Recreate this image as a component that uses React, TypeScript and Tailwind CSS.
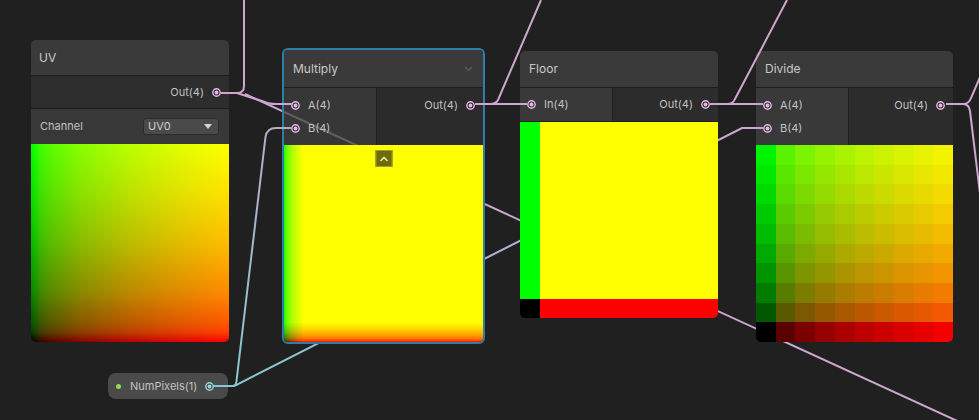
import React from 'react'

const PINK = '#cfa6cf'
const CYAN = '#86c9d2'

// linear -> sRGB steps for the 10x10 preview
const steps = [0, 89, 124, 149, 170, 188, 203, 218, 231, 243]

function Port({ cyan }: { cyan?: boolean }) {
  const c = cyan ? '#92d6df' : '#e6b8e6'
  return (
    <svg width="9" height="9" viewBox="0 0 9 9" className="shrink-0">
      <circle cx="4.5" cy="4.5" r="3.7" fill="none" stroke={c} strokeWidth="1.4" />
      <circle cx="4.5" cy="4.5" r="1.9" fill={c} />
    </svg>
  )
}

function InPort({ label }: { label: string }) {
  return (
    <div className="flex h-[23px] items-center gap-[8px] pl-[7px]">
      <Port />
      <span className="text-[11px] text-[#c2c2c2]">{label}</span>
    </div>
  )
}

function OutPort() {
  return (
    <div className="flex h-[23px] items-center justify-end gap-[8px] pr-[8px]">
      <span className="text-[11px] text-[#c2c2c2]">Out(4)</span>
      <Port />
    </div>
  )
}

function Header({ title, h36 }: { title: string; h36?: boolean }) {
  return (
    <div className={`flex items-center border-b border-[#1e1e1e] bg-[#3a3a3a] px-[9px] text-[12px] text-[#c9c9c9] ${h36 ? 'h-[37px]' : 'h-[38px]'}`}>
      {title}
    </div>
  )
}

export default function App() {
  return (
    <div className="relative h-[420px] w-[979px] overflow-hidden bg-[#202020] font-['Inter',sans-serif]">
      {/* wires running under the nodes */}
      <svg className="absolute inset-0" width="979" height="420">
        <defs>
          <linearGradient id="np-div" gradientUnits="userSpaceOnUse" x1="232" y1="386" x2="767" y2="128">
            <stop offset="0" stopColor={CYAN} />
            <stop offset="1" stopColor={PINK} />
          </linearGradient>
        </defs>
        <path d="M245 94 L990 436" stroke={PINK} strokeWidth="2" fill="none" />
        <path d="M226 386 L233 386 Q236 386 240 383 L742 128 L767 128" stroke="url(#np-div)" strokeWidth="2" fill="none" />
      </svg>

      {/* UV */}
      <div className="absolute left-[31px] top-[40px] w-[198px] overflow-hidden rounded-[5px]">
        <div className="flex h-[36px] items-center border-b border-[#1e1e1e] bg-[#3a3a3a] px-[8px] text-[12px] text-[#c9c9c9]">UV</div>
        <div className="flex h-[32px] items-center justify-end gap-[8px] bg-[#2d2d2d] pr-[8px]">
          <span className="text-[11px] text-[#c2c2c2]">Out(4)</span>
          <Port />
        </div>
        <div className="flex h-[36px] items-center justify-between border-t border-[#1e1e1e] bg-[#383838] pl-[9px] pr-[10px]">
          <span className="text-[11px] text-[#c2c2c2]">Channel</span>
          <div className="flex h-[17px] w-[76px] items-center justify-between rounded-[3px] border border-[#2c2c2c] bg-[#4a4a4a] pl-[4px] pr-[6px]">
            <span className="text-[11px] text-[#d0d0d0]">UV0</span>
            <svg width="8" height="5" viewBox="0 0 8 5"><path d="M0 0 L8 0 L4 5 Z" fill="#d4d4d4" /></svg>
          </div>
        </div>
        <div className="h-[198px] bg-[linear-gradient(to_right,#000_0%,#3f0000_5%,#590000_10%,#890000_25%,#bc0000_50%,#e10000_75%,#f00_100%),linear-gradient(to_top,#000_0%,#003f00_5%,#005900_10%,#008900_25%,#00bc00_50%,#00e100_75%,#0f0_100%)] bg-blend-screen" />
      </div>

      {/* Multiply (selected) */}
      <div className="absolute left-[282px] top-[48px] w-[203px] rounded-[6px] border-2 border-[#2f7ea8]">
        <div className="overflow-hidden rounded-[4px]">
          <div className="flex h-[38px] items-center justify-between border-b border-[#1e1e1e] bg-[#3a3a3a] pl-[9px] pr-[10px] text-[12px] text-[#c9c9c9]">
            Multiply
            <svg width="9" height="6" viewBox="0 0 9 6"><path d="M1 1 L4.5 4.5 L8 1" stroke="#5c5c5c" strokeWidth="1.2" fill="none" /></svg>
          </div>
          <div className="flex h-[57px]">
            <div className="w-[93px] border-r border-[#1f1f1f] bg-[#414141]/[0.73] pt-[6px]">
              <InPort label="A(4)" />
              <InPort label="B(4)" />
            </div>
            <div className="flex-1 bg-[#303030]/[0.73] pt-[6px]">
              <OutPort />
            </div>
          </div>
          <div className="relative h-[197px] bg-[linear-gradient(to_right,#000_0%,#3f0000_0.5%,#590000_1%,#890000_2.5%,#bc0000_5%,#e10000_7.5%,#f00_10%),linear-gradient(to_top,#000_0%,#003f00_0.5%,#005900_1%,#008900_2.5%,#00bc00_5%,#00e100_7.5%,#0f0_10%)] bg-blend-screen">
            <div className="absolute left-1/2 top-[5px] flex h-[17px] w-[17px] -translate-x-1/2 items-center justify-center border border-[#9a9a50] bg-[#6c6c00]">
              <svg width="9" height="6" viewBox="0 0 9 6"><path d="M1 5 L4.5 1.5 L8 5" stroke="#e4e4c4" strokeWidth="1.6" fill="none" /></svg>
            </div>
          </div>
        </div>
      </div>

      {/* Floor */}
      <div className="absolute left-[520px] top-[51px] w-[198px] overflow-hidden rounded-[5px]">
        <Header title="Floor" h36 />
        <div className="flex h-[34px] border-b border-[#1e1e1e]">
          <div className="flex w-[93px] items-center border-r border-[#1f1f1f] bg-[#393939]">
            <InPort label="In(4)" />
          </div>
          <div className="flex flex-1 items-center justify-end bg-[#2c2c2c]">
            <OutPort />
          </div>
        </div>
        <div className="grid h-[196px] grid-cols-[20px_1fr] grid-rows-[1fr_19px]">
          <div className="bg-[#0f0]" />
          <div className="bg-[#ff0]" />
          <div className="bg-black" />
          <div className="bg-[#f00]" />
        </div>
      </div>

      {/* Divide */}
      <div className="absolute left-[756px] top-[51px] w-[197px] overflow-hidden rounded-[5px]">
        <Header title="Divide" h36 />
        <div className="flex h-[57px]">
          <div className="w-[93px] border-r border-[#1f1f1f] bg-[#393939] pt-[6px]">
            <InPort label="A(4)" />
            <InPort label="B(4)" />
          </div>
          <div className="flex-1 bg-[#2c2c2c] pt-[6px]">
            <OutPort />
          </div>
        </div>
        <div className="grid h-[197px] grid-cols-10 grid-rows-10">
          {Array.from({ length: 100 }, (_, k) => {
            const row = Math.floor(k / 10)
            const col = k % 10
            return <div key={k} style={{ background: `rgb(${steps[col]},${steps[9 - row]},0)` }} />
          })}
        </div>
      </div>

      {/* NumPixels property */}
      <div className="absolute left-[108px] top-[373px] flex h-[26px] w-[120px] items-center rounded-[8px] bg-[#4a4a4a] pl-[8px]">
        <span className="h-[5px] w-[5px] rounded-full bg-[#8fdc5c]" />
        <span className="ml-[9px] text-[11px] text-[#c2c2c2]">NumPixels(1)</span>
        <span className="ml-[8px]"><Port cyan /></span>
      </div>

      {/* wires drawn over the nodes */}
      <svg className="pointer-events-none absolute inset-0" width="979" height="420">
        <defs>
          <linearGradient id="np-mul" gradientUnits="userSpaceOnUse" x1="0" y1="386" x2="0" y2="128">
            <stop offset="0" stopColor={CYAN} />
            <stop offset="1" stopColor="#b9a9c9" />
          </linearGradient>
        </defs>
        <g stroke={PINK} strokeWidth="2" fill="none">
          <path d="M221 93 L237 93 Q244 93 244 86 L244 0" />
          <path d="M237 93 L262 101 Q268 104 276 104 L292 104" />
          <path d="M475 104 L527 104" />
          <path d="M490 104 Q496 104 498 100 L541 0" />
          <path d="M710 104 L763 104" />
          <path d="M727 104 Q733 104 735 99 L787 0" />
          <path d="M742 128 L763 128" />
          <path d="M946 104 L963 104 Q969 104 971 98 L984 68" />
          <path d="M963 104 Q969 104 970 111 L982 210" />
        </g>
        <path d="M213 386 L233 386 Q236 386 236.5 381 L265.5 137 Q267 128 276 128 L292 128" stroke="url(#np-mul)" strokeWidth="2" fill="none" />
      </svg>
    </div>
  )
}
